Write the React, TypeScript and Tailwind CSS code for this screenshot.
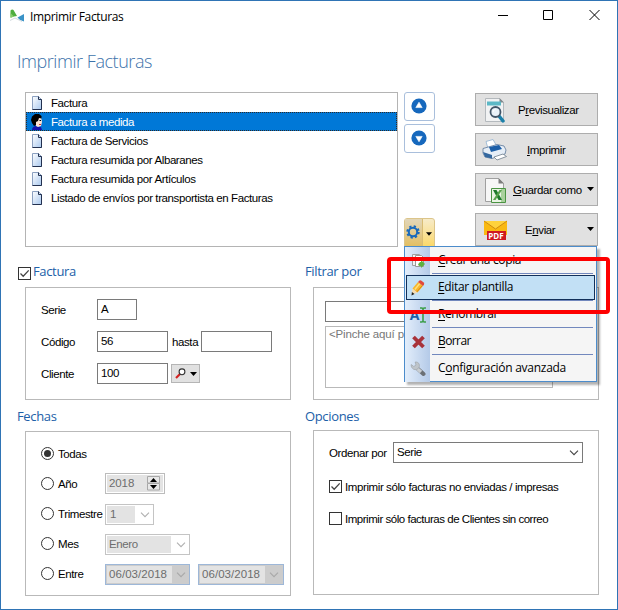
import React, { useState } from 'react';
import clsx from 'clsx';

const templates = [
    { name: 'Factura', custom: false },
    { name: 'Factura a medida', custom: true },
    { name: 'Factura de Servicios', custom: false },
    { name: 'Factura resumida por Albaranes', custom: false },
    { name: 'Factura resumida por Artículos', custom: false },
    { name: 'Listado de envíos por transportista en Facturas', custom: false },
];

const PageIcon = () => (
    <svg width="12" height="14" viewBox="0 0 12 14">
        <defs>
            <linearGradient id="page" x1="0" y1="0" x2="1" y2="1">
                <stop offset="0" stopColor="#ffffff" />
                <stop offset="1" stopColor="#a9c8ee" />
            </linearGradient>
        </defs>
        <path d="M1.500 .5h6l3 3v10h-9z" fill="url(#page)" stroke="#8ba0c0" />
        <path d="M7.500.5v3h3v10h-9" fill="none" stroke="#22304f" />
    </svg>
);

const FaceIcon = () => (
    <svg width="12" height="16" viewBox="0 0 12 16">
        <path d="M1 16c0-3 2-4 4-4l5 1 1 3z" fill="#1414b0" />
        <path d="M5 3h5l1 5-1 4-3 1-2-1z" fill="#fbe3d4" />
        <path d="M10.500 2L8 0H4L1 2.500 0 6l1 3 2 3 2-1V8l2-1 1-3 2.500.5z" fill="#000" />
        <path d="M8.500 6H10v1H8.500z" fill="#000" />
        <path d="M8 10h2v1H8z" fill="#d33" />
    </svg>
);

const AppIcon = () => (
    <svg width="16" height="14" viewBox="0 0 16 14">
        <path d="M1.500 8.500V1.500Q3 0 4.500 1L8 7l-3 .5z" fill="#4fae3f" />
        <path d="M1.500 9V4l3.500 3.500z" fill="#86cc6c" />
        <path d="M8.500 8.500L15 5v7.500L11 11z" fill="#3a93c7" />
        <path d="M1 11.500L6 9l3 1.500 4 2" fill="none" stroke="#d4dbe0" />
    </svg>
);

const ArrowCircle: React.FC<{ down?: boolean }> = ({ down }) => (
    <svg width="16" height="16" viewBox="0 0 16 16" className={clsx('-mt-[2px] -ml-[2px]', down && 'rotate-180')}>
        <circle cx="8" cy="8" r="7.600" fill="#1668bd" />
        <path d="M8 4.200l3.200 5.400H4.800z" fill="#fff" stroke="#fff" strokeLinejoin="round" strokeWidth=".6" />
    </svg>
);

const Caret: React.FC<{ className?: string }> = ({ className }) => (
    <svg width="7" height="4" viewBox="0 0 7 4" className={clsx('shrink-0', className)}>
        <path d="M0 0h7L3.500 4z" fill="#000" />
    </svg>
);

const Chevron: React.FC<{ className?: string }> = ({ className }) => (
    <svg width="10" height="6" viewBox="0 0 10 6" className={clsx('shrink-0', className)}>
        <path d="M1 .7l4 4 4-4" fill="none" stroke="currentColor" strokeWidth="1.100" />
    </svg>
);

const GearIcon = () => (
    <svg width="14" height="14" viewBox="0 0 14 14">
        <circle cx="7" cy="7" r="5.700" fill="none" stroke="#1668bd" strokeWidth="2" strokeDasharray="2.240 2.240" />
        <circle cx="7" cy="7" r="4.200" fill="none" stroke="#1668bd" strokeWidth="2" />
    </svg>
);

const PreviewIcon = () => (
    <svg width="22" height="26" viewBox="0 0 22 26">
        <path d="M1.500 1.500h14l4 4v19h-18z" fill="#f1f2f3" stroke="#b4b9bd" />
        <path d="M15.500 1l4.500 4.500h-4.500z" fill="#80878c" />
        <path d="M3 4.500h14v4H3z" fill="#5cb8c6" />
        <path d="M15 19l4 5" stroke="#1b7fa8" strokeWidth="3.500" strokeLinecap="round" />
        <circle cx="11.500" cy="15" r="5" fill="#e9f1f8" stroke="#425568" strokeWidth="1.800" />
        <path d="M9 15a2.500 2.500 0 0 1 2.500-2.500" stroke="#fff" fill="none" />
    </svg>
);

const PrinterIcon = () => (
    <svg width="25" height="22" viewBox="0 0 25 22">
        <path d="M4 2.500L11 .5l4 7-9 2z" fill="#fff" stroke="#8fb0d0" strokeWidth=".8" />
        <path d="M1 9.500L15 5.500l7 1.500 2 4-1 4-13 4.500-7-1.500-2-4z" fill="#e6eef7" stroke="#5a7698" strokeWidth=".8" />
        <path d="M7 8l10-2 3 4-11 3z" fill="#1c5fa8" />
        <path d="M1 13l2 5 7 1.500V16z" fill="#34689f" />
        <path d="M12 18l9-3 3.500 2.500L15 21z" fill="#fff" stroke="#6f7d8c" strokeWidth=".8" />
    </svg>
);

const ExcelIcon = () => (
    <svg width="22" height="26" viewBox="0 0 22 26">
        <path d="M1.500 1.500h13l5 5v18h-18z" fill="#f7f7f7" stroke="#a0a0a0" />
        <path d="M14.500 1l5.500 5.500h-5.500z" fill="#7d7d7d" />
        <path d="M7.500 11.500h14v14h-14z" fill="#eaf4e4" stroke="#4b9443" />
        <path d="M17 12h4v13h-4z" fill="#a9d19d" />
        <path d="M9 13h3.500l5.500 10h-3.500z" fill="#1f7a2c" />
        <path d="M15.500 13H18l-6.500 10H9z" fill="#58a34b" />
    </svg>
);

const PdfMailIcon = () => (
    <span className="relative block h-[20px] w-[24px] shrink-0">
        <svg width="24" height="20" viewBox="0 0 24 20">
            <path d="M1 1h23v14H1z" fill="#f9b912" />
            <path d="M1 1h23L12.500 9z" fill="#ffd23c" />
            <path d="M1 1l11.500 8L24 1" fill="none" stroke="#cf8a10" />
            <path d="M4 11h19v9H4z" fill="#cf1820" />
        </svg>
        <span className="absolute top-[11px] left-[4px] w-[19px] text-center font-[Open_Sans] text-[8px] leading-[9px] font-bold tracking-normal text-white">PDF</span>
    </span>
);

const SearchIcon = () => (
    <svg width="11" height="11" viewBox="0 0 11 11">
        <path d="M1 10l4-4" stroke="#d42020" strokeWidth="2.200" />
        <circle cx="7" cy="3.800" r="2.900" fill="#fff" stroke="#333" strokeWidth="1.100" />
    </svg>
);

const CopyIcon = () => (
    <svg width="16" height="16" viewBox="0 0 16 16">
        <path d="M2.500 1.500h7v11h-7z" fill="#f3f3f3" stroke="#a0a0a0" />
        <path d="M5.500 2.500h6l2 2v9h-8z" fill="#fff" stroke="#999" />
        <path d="M8 12c1-3 2-3 3-3V7l4 4-4 4v-2c-1 0-2 0-3-1z" fill="#5fb13e" />
    </svg>
);

const PencilIcon = () => (
    <svg width="16" height="16" viewBox="0 0 16 16">
        <path d="M1.500 15l1-6.500 5 4z" fill="#f7ddb0" />
        <path d="M1.500 15.500l.4-3.500 2.600 2z" fill="#222" />
        <path d="M2.500 8.500L8 2l5 4-5.500 6.500z" fill="#f8b62a" />
        <path d="M4.800 9.500l5-6" stroke="#ffe07a" strokeWidth="1.500" />
        <path d="M6.900 11.800l5.500-6.300" stroke="#d98512" />
        <path d="M8 2l1.500-1.500Q10.500 0 11.500.7l2.200 1.800q.9 1 .3 2L13 6z" fill="#e0493c" />
    </svg>
);

const RenameIcon = () => (
    <span className="flex items-center gap-px">
        <span className="font-[Open_Sans] text-[14px] leading-[16px] font-bold text-[#1c5fa8]">A</span>
        <svg width="6" height="16" viewBox="0 0 6 16">
            <path d="M0 1h2l1 1 1-1h2M3 2v12M0 15h2l1-1 1 1h2" stroke="#3d9e4a" strokeWidth="1.600" fill="none" />
        </svg>
    </span>
);

const DeleteIcon = () => (
    <svg width="15" height="14" viewBox="0 0 15 14">
        <path d="M2.500 2l10 10M12.500 2l-10 10" stroke="#a8323a" strokeWidth="3.800" />
    </svg>
);

const WrenchIcon = () => (
    <svg width="16" height="16" viewBox="0 0 16 16">
        <path d="M8 8l5.500 5" stroke="#6b7075" strokeWidth="4" strokeLinecap="round" />
        <path d="M6 6.500l5 4.500" stroke="#c9ced2" strokeWidth="3.400" />
        <path d="M1.200 3.500l2.600 2 2.200-1.500-.8-3c3-.3 4.800 2 4 4.800-.8 2.700-3.700 3.400-5.700 2.400C2 7.200.8 5.500 1.200 3.500z" fill="#bfc5ca" stroke="#9fa5aa" strokeWidth=".7" />
    </svg>
);

const menuItems = [
    { icon: <CopyIcon />, key: 'C', before: '', after: 'rear una copia', tracking: 'tracking-[-0.35px]' },
    { icon: <PencilIcon />, key: 'E', before: '', after: 'ditar plantilla', tracking: 'tracking-[-0.33px]' },
    { icon: <RenameIcon />, key: 'R', before: '', after: 'enombrar', tracking: 'tracking-[-0.4px]' },
    { icon: <DeleteIcon />, key: 'B', before: '', after: 'orrar', tracking: 'tracking-[-0.6px]' },
    { icon: <WrenchIcon />, key: 'o', before: 'C', after: 'nfiguración avanzada', tracking: 'tracking-[-0.28px]' },
];

const Checkbox: React.FC<{ checked: boolean; onChange: () => void }> = ({ checked, onChange }) => (
    <button onClick={onChange} className="flex size-[13px] shrink-0 items-center justify-center border border-[#333] bg-white">
        {checked && (
            <svg width="11" height="11" viewBox="0 0 11 11">
                <path d="M1.500 5.500l2.700 2.700L9.700 2.400" fill="none" stroke="#444" strokeWidth="1.300" />
            </svg>
        )}
    </button>
);

const Radio: React.FC<{ label: string; checked: boolean; onChange: () => void }> = ({ label, checked, onChange }) => (
    <button onClick={onChange} className="flex h-[21px] w-[64px] shrink-0 items-center gap-[4px] whitespace-nowrap">
        <span className="flex size-[13px] shrink-0 items-center justify-center rounded-full border border-[#333] bg-white">
            {checked && <span className="size-[7px] rounded-full bg-[#333]" />}
        </span>
        <span className="pt-px">{label}</span>
    </button>
);

const Field: React.FC<{ value?: string; className?: string }> = ({ value, className }) => (
    <div className={clsx('flex h-[21px] items-center border border-[#7a7a7a] bg-white pl-[3px]', className)}>{value}</div>
);

const DateField: React.FC<{ value: string; className: string }> = ({ value, className }) => (
    <div className={clsx('flex h-[21px] border border-[#9db7d8] bg-[#cccccc] p-px text-[#6d6d6d] tracking-[0.05px]', className)}>
        <span className="flex w-[65px] items-center bg-[#e3e3e3] pl-[2px]">{value}</span>
        <Chevron className="mt-[6px] ml-[4px] text-[#a8a8a8]" />
    </div>
);

const SideButton: React.FC<{ icon: React.ReactNode; caret?: boolean; textClass: string; children: React.ReactNode }> = ({ icon, caret, textClass, children }) => (
    <button className="flex h-[33px] w-[123px] items-center border border-[#adadad] bg-[#e1e1e1] pl-[6px]">
        <span className="flex w-[25px] shrink-0 justify-center">{icon}</span>
        <span className={clsx('flex-1 pt-px text-left whitespace-nowrap', textClass)}>{children}</span>
        {caret && <Caret className="mr-[3px] -mt-px" />}
    </button>
);

const SectionTitle: React.FC<{ className?: string; children: React.ReactNode }> = ({ className, children }) => (
    <h2 className={clsx('flex items-center font-[Open_Sans] text-[13px] tracking-[-0.35px] text-[#2160a8]', className)}>{children}</h2>
);

const App: React.FC = () => {
    const [selected, setSelected] = useState(1);
    const [period, setPeriod] = useState('Todas');
    const [byInvoice, setByInvoice] = useState(true);
    const [notSent, setNotSent] = useState(true);
    const [noMail, setNoMail] = useState(false);

    return (
        <div className="h-[610px] w-[618px] overflow-hidden border border-[#2f74b5] bg-white font-[Liberation_Sans,sans-serif] text-[11.5px] leading-[13px] tracking-[-0.4px] text-black">
            {/* Title bar */}
            <header className="flex h-[30px] items-center pl-[8px]">
                <AppIcon />
                <span className="ml-[5px] flex-1 font-[Open_Sans] text-[12px] tracking-[-0.35px]">Imprimir Facturas</span>
                <svg width="102" height="12" viewBox="0 0 102 12" className="mr-[17px] -mt-[2px]" fill="none" stroke="#000">
                    <path d="M0 6.500h10M45.500 1.500h9v9h-9zM91.500 1l10 10M101.500 1l-10 10" />
                </svg>
            </header>

            <h1 className="flex h-[60px] items-center pl-[16px] font-[Open_Sans] text-[18px] font-light tracking-[-0.45px] text-[#3d73ab]">Imprimir Facturas</h1>

            {/* Templates */}
            <div className="mt-px flex h-[155px] pl-[24px]">
                <ul className="w-[373px] border border-[#b4b4b4]">
                    {templates.map((t, i) => (
                        <li
                            key={t.name}
                            onClick={() => setSelected(i)}
                            className={clsx(
                                'flex h-[19px] items-center border border-dotted',
                                i === selected ? 'border-[#2b2b2b] bg-[#0078d7] text-white' : 'border-transparent'
                            )}
                        >
                            <span className="mr-[3px] flex w-[20px] justify-center">{t.custom ? <FaceIcon /> : <PageIcon />}</span>
                            <span className="ml-px pt-px whitespace-nowrap">{t.name}</span>
                        </li>
                    ))}
                </ul>

                <div className="ml-[6px] flex w-[31px] flex-col">
                    <button className="flex h-[29px] items-center justify-center rounded-[3px] border border-[#a9bfdc]"><ArrowCircle /></button>
                    <button className="mt-[3px] flex h-[29px] items-center justify-center rounded-[3px] border border-[#a9bfdc]"><ArrowCircle down /></button>
                    <div className="relative mt-auto">
                        <button className="flex h-[29px] w-[31px] items-center rounded-t-[3px] border border-[#dcc58a] bg-linear-to-b from-[#f7ebc8] to-[#fbd867]">
                            <span className="flex h-full w-[18px] items-center justify-center border-r border-[#d9bd74] bg-linear-to-b from-[#e2d6b8] to-[#e3bf62] pr-px pb-[2px]"><GearIcon /></span>
                            <Caret className="mt-[3px] ml-[3px] w-[6px]" />
                        </button>

                        <ul className="absolute top-[28px] left-0 z-10 h-[136px] w-[193px] border border-[#4c8ccb] bg-[#f5f5f5] font-[Open_Sans] text-[12px] shadow-[3px_3px_2px_0px_rgba(0,0,0,0.3)]">
                            {menuItems.map((item, i) => (
                                <li key={item.after} className="relative flex h-[27px]">
                                    <span className="w-[25px] shrink-0 bg-linear-to-r from-[#e3eefb] to-[#b4cae8]" />
                                    <span className={clsx('ml-[2px] flex-1', i < 4 && 'mr-[3px] border-b border-[#7288bd]')} />
                                    <span
                                        className={clsx(
                                            'absolute inset-x-px top-px flex h-[25px] items-center border',
                                            i === 1 ? 'border-[#12305a] bg-[#c2e0f5]' : 'border-transparent'
                                        )}
                                    >
                                        <span className="flex w-[22px] justify-center">{item.icon}</span>
                                        <span className={clsx('-mt-[2px] ml-[9px] whitespace-nowrap', item.tracking)}>
                                            {item.before}<u className="underline-offset-2">{item.key}</u>{item.after}
                                        </span>
                                    </span>
                                </li>
                            ))}
                        </ul>
                        <div className="absolute top-[39px] left-[-17px] z-20 h-[57px] w-[223px] rounded-[4px] border-4 border-[#fe0000]" />
                    </div>
                </div>

                <div className="mt-px ml-[40px] flex flex-col gap-[7px]">
                    <SideButton icon={<PreviewIcon />} textClass="pl-[11px]">P<u>r</u>evisualizar</SideButton>
                    <SideButton icon={<PrinterIcon />} textClass="pl-[20px]"><u>I</u>mprimir</SideButton>
                    <SideButton icon={<ExcelIcon />} textClass="pl-[6px]" caret><u>G</u>uardar como</SideButton>
                    <SideButton icon={<PdfMailIcon />} textClass="pl-[18px]" caret>E<u>n</u>viar</SideButton>
                </div>
            </div>

            <div className="flex gap-[14px] pl-[16px]">
                <div className="w-[274px]">
                    <SectionTitle className="h-[40px] gap-[2px] pt-[8px]">
                        <span className="mt-[4px] ml-px"><Checkbox checked={byInvoice} onChange={() => setByInvoice(!byInvoice)} /></span>
                        Factura
                    </SectionTitle>
                    <section className="ml-[8px] flex h-[113px] flex-col gap-[11px] border border-[#b9b9b9] pt-[11px] pl-[15px]">
                        <div className="flex items-center">
                            <span className="w-[56px] pt-px">Serie</span>
                            <Field value="A" className="w-[40px]" />
                        </div>
                        <div className="flex items-center">
                            <span className="w-[56px] pt-px">Código</span>
                            <Field value="56" className="w-[71px]" />
                            <span className="ml-[4px] w-[29px] pt-px">hasta</span>
                            <Field className="w-[71px]" />
                        </div>
                        <div className="flex items-center">
                            <span className="w-[56px] pt-px">Cliente</span>
                            <Field value="100" className="w-[71px]" />
                            <button className="ml-[3px] flex h-[19px] w-[29px] items-center gap-[4px] border border-[#b5b5b5] bg-[#e1e1e1] pl-[3px]">
                                <SearchIcon />
                                <Caret />
                            </button>
                        </div>
                    </section>

                    {/* Dates */}
                    <SectionTitle className="h-[31px] pt-px">Fechas</SectionTitle>
                    <section className="ml-[8px] flex h-[165px] flex-col gap-[9px] border border-[#b9b9b9] pt-[11px] pl-[15px]">
                        <div className="flex h-[21px]">
                            <Radio label="Todas" checked={period === 'Todas'} onChange={() => setPeriod('Todas')} />
                        </div>
                        <div className="flex h-[21px]">
                            <Radio label="Año" checked={period === 'Año'} onChange={() => setPeriod('Año')} />
                            <div className="flex h-[21px] w-[60px] items-center border border-[#bcbcbc] p-px text-[#6d6d6d]">
                                <span className="flex h-full flex-1 items-center bg-[#e3e3e3] pb-px pl-[2px] tracking-[-0.1px]">2018</span>
                                <span className="flex h-full w-[16px] items-center bg-[#e3e3e3]">
                                    <svg width="14" height="15" viewBox="0 0 14 15">
                                        <path d="M.5.500h12v6.500H.5zM.5 7.500h12V14H.5z" fill="#e8e8e8" stroke="#a8a8a8" />
                                        <path d="M3 6l3.500-4L10 6zM3 9h7l-3.500 4z" fill="#000" />
                                    </svg>
                                </span>
                            </div>
                        </div>
                        <div className="flex h-[21px]">
                            <Radio label="Trimestre" checked={period === 'Trimestre'} onChange={() => setPeriod('Trimestre')} />
                            <div className="mt-px flex h-[21px] w-[49px] border border-[#c4c4c4] p-px text-[#6d6d6d]">
                                <span className="flex w-[28px] items-center bg-[#e3e3e3] pl-[3px]">1</span>
                                <Chevron className="mt-[6px] ml-[5px] text-[#b0b0b0]" />
                            </div>
                        </div>
                        <div className="flex h-[21px]">
                            <Radio label="Mes" checked={period === 'Mes'} onChange={() => setPeriod('Mes')} />
                            <div className="mt-px flex h-[21px] w-[85px] border border-[#c4c4c4] p-px text-[#6d6d6d]">
                                <span className="flex w-[64px] items-center bg-[#e3e3e3] pl-[2px]">Enero</span>
                                <Chevron className="mt-[6px] ml-[5px] text-[#b0b0b0]" />
                            </div>
                        </div>
                        <div className="flex h-[21px]">
                            <Radio label="Entre" checked={period === 'Entre'} onChange={() => setPeriod('Entre')} />
                            <DateField value="06/03/2018" className="mt-px w-[85px]" />
                            <DateField value="06/03/2018" className="mt-px ml-[8px] w-[86px]" />
                        </div>
                    </section>
                </div>

                <div className="w-[294px]">
                    <SectionTitle className="h-[40px] pt-[9px]">Filtrar por</SectionTitle>
                    <section className="ml-[8px] flex h-[113px] flex-col gap-[4px] border border-[#b9b9b9] pt-[13px] pl-[11px]">
                        <Field className="w-[228px]" />
                        <div className="h-[62px] w-[228px] overflow-hidden border border-[#b9b9b9] pt-px pl-[3px] tracking-[-0.15px] whitespace-nowrap text-[#777]">{'<Pinche aquí para'}</div>
                    </section>

                    {/* Options */}
                    <SectionTitle className="h-[31px] pt-px">Opciones</SectionTitle>
                    <section className="-mt-px ml-[8px] h-[165px] border border-[#b9b9b9] pt-[11px] pl-[15px]">
                        <div className="flex items-center">
                            <span className="w-[64px] pt-px">Ordenar por</span>
                            <Field value="Serie" className="w-[190px]" />
                            <Chevron className="-ml-[14px] text-[#444]" />
                        </div>
                        <label className="mt-[17px] flex h-[13px] items-center gap-[3px]">
                            <Checkbox checked={notSent} onChange={() => setNotSent(!notSent)} />
                            <span className="pt-px">Imprimir sólo facturas no enviadas / impresas</span>
                        </label>
                        <label className="mt-[19px] flex h-[13px] items-center gap-[3px]">
                            <Checkbox checked={noMail} onChange={() => setNoMail(!noMail)} />
                            <span className="pt-px tracking-[-0.47px]">Imprimir sólo facturas de Clientes sin correo</span>
                        </label>
                    </section>
                </div>
            </div>
        </div>
    );
};

export default App;
